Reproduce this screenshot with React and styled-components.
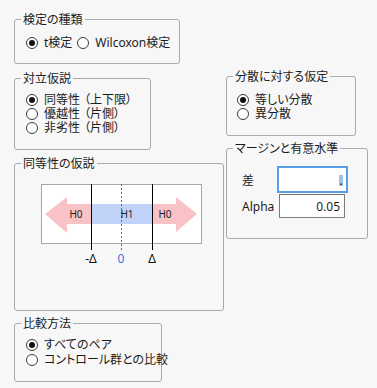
import React from "react";
import styled, { createGlobalStyle } from "styled-components";

const GlobalStyle = createGlobalStyle`
  body {
    margin: 0;
    background: #f7f7f7;
    font-family: "Noto Sans", "Noto Sans CJK JP", sans-serif;
    font-size: 12px;
    color: #1b1b1b;
  }
`;

const Page = styled.div`
  width: 377px;
  height: 388px;
  box-sizing: border-box;
  padding: 12px 0 0 14px;
  display: flex;
  flex-direction: column;
  gap: 5px;
`;

const MiddleRow = styled.div`
  display: flex;
  gap: 2px;
  align-items: flex-start;
`;

const Column = styled.div`
  display: flex;
  flex-direction: column;
  gap: ${({ $gap }) => $gap}px;
  padding-top: ${({ $top }) => $top || 0}px;
`;

const Group = styled.fieldset`
  margin: 0;
  padding: 0;
  min-width: 0;
  box-sizing: border-box;
  width: ${({ $w }) => $w}px;
  height: ${({ $h }) => $h}px;
  border: 1px solid #aaaaaa;
  border-radius: 3px;
`;

const Legend = styled.legend`
  margin-left: 6px;
  padding: 0 2px;
  font-family: "Noto Sans CJK JP", sans-serif;
  font-feature-settings: "palt";
  font-size: 12px;
  line-height: 14px;
`;

const Content = styled.div`
  padding: ${({ $pad }) => $pad};
`;

const RadioList = styled.div`
  display: flex;
  flex-direction: ${({ $row }) => ($row ? "row" : "column")};
  gap: ${({ $gap }) => $gap || 0}px;
`;

const RadioLabel = styled.label`
  display: flex;
  align-items: center;
  gap: 6px;
  height: 14px;
  line-height: 14px;
  font-feature-settings: "palt";
  white-space: nowrap;
`;

// parenthesised note keeps some air around its brackets, as in the dialog font
const Note = styled.span`
  padding: 0 2px 0 4px;
`;

const RadioDot = styled.span`
  flex-shrink: 0;
  width: 12px;
  height: 12px;
  box-sizing: border-box;
  border-radius: 50%;
  border: 1px solid #3a3a3a;
  background: #fff;
  display: flex;
  align-items: center;
  justify-content: center;

  &::after {
    content: "";
    width: 6px;
    height: 6px;
    border-radius: 50%;
    background: ${({ $on }) => ($on ? "#111" : "transparent")};
  }
`;

const Radio = ({ on, children }) => (
  <RadioLabel>
    <RadioDot $on={on} />
    <span>{children}</span>
  </RadioLabel>
);

const FieldRow = styled.div`
  display: flex;
  align-items: center;
  margin-top: ${({ $mt }) => $mt || 0}px;
`;

const FieldLabel = styled.span`
  width: ${({ $w }) => $w}px;
  font-family: "Noto Sans", "Noto Sans CJK JP", sans-serif;
  font-size: 12px;
`;

const NumBox = styled.div`
  box-sizing: border-box;
  width: ${({ $w }) => $w}px;
  height: ${({ $h }) => $h}px;
  background: #fff;
  border: ${({ $focus }) => ($focus ? "2px solid #5b9ee8" : "1px solid #7a7a7a")};
  display: flex;
  align-items: center;
  justify-content: flex-end;
  padding-right: ${({ $focus }) => ($focus ? 3 : 4)}px;
  font-size: 12px;
`;

const Selected = styled.span`
  background: #9dc3ef;
  line-height: 11px;
  height: 11px;
  width: 4px;
  font-size: 12px;
  display: flex;
  align-items: flex-end;
  justify-content: center;
  margin-top: 1px;
`;

const Diagram = () => (
  <svg width="162" height="85" viewBox="0 0 162 85">
    <rect x="0.5" y="0.5" width="160" height="59" fill="#fff" stroke="#a6a6a6" />
    <polygon points="4,30 26,13 26,49" fill="#f9c2c7" />
    <rect x="26" y="20" width="24" height="20" fill="#f9c2c7" />
    <rect x="50" y="20" width="61" height="20" fill="#c0d2f7" />
    <rect x="111" y="20" width="24" height="20" fill="#f9c2c7" />
    <polygon points="156,30 135,13 135,48" fill="#f9c2c7" />
    <line x1="50.5" y1="0" x2="50.5" y2="66" stroke="#000" />
    <line x1="111.5" y1="0" x2="111.5" y2="66" stroke="#000" />
    <line x1="80.5" y1="0" x2="80.5" y2="66" stroke="#3d6fe0" strokeDasharray="2 2" />
    <g fontFamily="Noto Sans, sans-serif" fontSize="10" fill="#222" textAnchor="middle">
      <text x="35" y="34">H0</text>
      <text x="86" y="34">H1</text>
      <text x="124" y="34">H0</text>
    </g>
    <g fontFamily="Noto Sans, sans-serif" fontSize="12" textAnchor="middle">
      <text x="50" y="79" fill="#111">-Δ</text>
      <text x="80" y="79" fill="#3d6fe0">0</text>
      <text x="111" y="79" fill="#111">Δ</text>
    </g>
  </svg>
);

export default function App() {
  return (
    <>
      <GlobalStyle />
      <Page>
        <Group $w={166} $h={52}>
          <Legend>検定の種類</Legend>
          <Content $pad="10px 0 0 11px">
            <RadioList $row $gap={5}>
              <Radio on>t検定</Radio>
              <Radio>Wilcoxon検定</Radio>
            </RadioList>
          </Content>
        </Group>

        <MiddleRow>
          <Column $gap={6} $top={2}>
            <Group $w={137} $h={79}>
              <Legend>対立仮説</Legend>
              <Content $pad="8px 0 0 11px">
                <RadioList>
                  <Radio on>同等性<Note>（上下限）</Note></Radio>
                  <Radio>優越性<Note>（片側）</Note></Radio>
                  <Radio>非劣性<Note>（片側）</Note></Radio>
                </RadioList>
              </Content>
            </Group>
            <Group $w={210} $h={155}>
              <Legend>同等性の仮説</Legend>
              <Content $pad="14px 0 0 26px">
                <Diagram />
              </Content>
            </Group>
          </Column>

          <Column $gap={5}>
            <Group $w={130} $h={67}>
              <Legend>分散に対する仮定</Legend>
              <Content $pad="10px 0 0 10px">
                <RadioList>
                  <Radio on>等しい分散</Radio>
                  <Radio>異分散</Radio>
                </RadioList>
              </Content>
            </Group>
            <Group $w={142} $h={98}>
              <Legend>マージンと有意水準</Legend>
              <Content $pad="11px 0 0 15px">
                <FieldRow>
                  <FieldLabel $w={35}>差</FieldLabel>
                  <NumBox $focus $w={71} $h={27}>
                    <Selected>.</Selected>
                  </NumBox>
                </FieldRow>
                <FieldRow $mt={1}>
                  <FieldLabel $w={37}>Alpha</FieldLabel>
                  <NumBox $w={66} $h={24}>0.05</NumBox>
                </FieldRow>
              </Content>
            </Group>
          </Column>
        </MiddleRow>

        <Group $w={148} $h={66}>
          <Legend>比較方法</Legend>
          <Content $pad="8px 0 0 11px">
            <RadioList $gap={1}>
              <Radio on>すべてのペア</Radio>
              <Radio>コントロール群との比較</Radio>
            </RadioList>
          </Content>
        </Group>
      </Page>
    </>
  );
}
